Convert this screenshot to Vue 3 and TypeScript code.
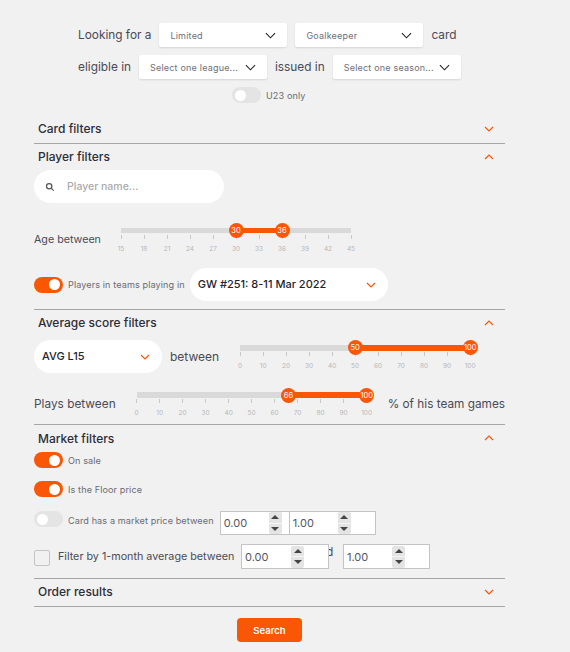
<script setup lang="ts">
import { ref } from 'vue'

interface Slider { min: number; max: number; low: number; high: number; labels: number[] }

const range = (start: number, step: number, n: number): number[] =>
  Array.from({ length: n }, (_, i) => start + i * step)

const ageSlider: Slider = { min: 15, max: 45, low: 30, high: 36, labels: range(15, 3, 11) }
const avgSlider: Slider = { min: 0, max: 100, low: 50, high: 100, labels: range(0, 10, 11) }
const playSlider: Slider = { min: 0, max: 100, low: 66, high: 100, labels: range(0, 10, 11) }

const pct = (s: Slider, v: number): string => `${((v - s.min) / (s.max - s.min)) * 100}%`
const fillStyle = (s: Slider) => ({ left: pct(s, s.low), right: `calc(100% - ${pct(s, s.high)})` })

const name = ref('')
</script>

<template>
  <main class="page">
    <h1 class="title">Card finder</h1>

    <div class="intro">
      <div class="intro-row">
        <span>Looking for a</span>
        <div class="drop"><span>Limited</span><svg class="chev" viewBox="0 0 12 7"><path d="M1 1l5 5 5-5" /></svg></div>
        <div class="drop"><span>Goalkeeper</span><svg class="chev" viewBox="0 0 12 7"><path d="M1 1l5 5 5-5" /></svg></div>
        <span>card</span>
      </div>
      <div class="intro-row">
        <span>eligible in</span>
        <div class="drop"><span>Select one league...</span><svg class="chev" viewBox="0 0 12 7"><path d="M1 1l5 5 5-5" /></svg></div>
        <span>issued in</span>
        <div class="drop"><span>Select one season...</span><svg class="chev" viewBox="0 0 12 7"><path d="M1 1l5 5 5-5" /></svg></div>
      </div>
      <div class="u23">
        <span class="toggle off"><i></i></span>
        <span class="small">U23 only</span>
      </div>
    </div>

    <section class="sec sec-closed first">
      <header class="head"><span>Card filters</span><svg class="acc" viewBox="0 0 10 6"><path d="M1 1l4 4 4-4" /></svg></header>
    </section>

    <section class="sec player">
      <header class="head"><span>Player filters</span><svg class="acc" viewBox="0 0 10 6"><path d="M1 5l4-4 4 4" /></svg></header>
      <label class="search">
        <svg viewBox="0 0 12 12" class="mag"><circle cx="5" cy="5" r="3.2" /><path d="M7.4 7.4l3 3" /></svg>
        <input v-model="name" placeholder="Player name..." />
      </label>

      <div class="slide-row age-row">
        <span class="lbl age-lbl">Age between</span>
        <div class="slider">
          <div class="track">
            <div class="fill" :style="fillStyle(ageSlider)"></div>
            <span class="handle" :style="{ left: pct(ageSlider, ageSlider.low) }">{{ ageSlider.low }}</span>
            <span class="handle" :style="{ left: pct(ageSlider, ageSlider.high) }">{{ ageSlider.high }}</span>
          </div>
          <div class="scale">
            <div v-for="l in ageSlider.labels" :key="l" class="tick"><i></i><span>{{ l }}</span></div>
          </div>
        </div>
      </div>

      <div class="teams">
        <span class="toggle on"><i></i></span>
        <span class="small">Players in teams playing in</span>
        <div class="pill gw"><span>GW #251: 8-11 Mar 2022</span><svg class="acc" viewBox="0 0 10 6"><path d="M1 1l4 4 4-4" /></svg></div>
      </div>
    </section>

    <section class="sec score">
      <header class="head"><span>Average score filters</span><svg class="acc" viewBox="0 0 10 6"><path d="M1 5l4-4 4 4" /></svg></header>
      <div class="slide-row avg-row">
        <div class="pill avg"><span>AVG L15</span><svg class="acc" viewBox="0 0 10 6"><path d="M1 1l4 4 4-4" /></svg></div>
        <span class="lbl between">between</span>
        <div class="slider">
          <div class="track thick">
            <div class="fill" :style="fillStyle(avgSlider)"></div>
            <span class="handle" :style="{ left: pct(avgSlider, avgSlider.low) }">{{ avgSlider.low }}</span>
            <span class="handle" :style="{ left: pct(avgSlider, avgSlider.high) }">{{ avgSlider.high }}</span>
          </div>
          <div class="scale">
            <div v-for="l in avgSlider.labels" :key="l" class="tick"><i></i><span>{{ l }}</span></div>
          </div>
        </div>
      </div>
      <div class="slide-row plays-row">
        <span class="lbl plays-lbl">Plays between</span>
        <div class="slider">
          <div class="track thick">
            <div class="fill" :style="fillStyle(playSlider)"></div>
            <span class="handle" :style="{ left: pct(playSlider, playSlider.low) }">{{ playSlider.low }}</span>
            <span class="handle" :style="{ left: pct(playSlider, playSlider.high) }">{{ playSlider.high }}</span>
          </div>
          <div class="scale">
            <div v-for="l in playSlider.labels" :key="l" class="tick"><i></i><span>{{ l }}</span></div>
          </div>
        </div>
        <span class="lbl pct-lbl">% of his team games</span>
      </div>
    </section>

    <section class="sec market">
      <header class="head market-head"><span>Market filters</span><svg class="acc" viewBox="0 0 10 6"><path d="M1 5l4-4 4 4" /></svg></header>
      <div class="m-row"><span class="toggle on"><i></i></span><span class="small">On sale</span></div>
      <div class="m-row floor"><span class="toggle on"><i></i></span><span class="small">Is the Floor price</span></div>
      <div class="m-row price">
        <span class="toggle off"><i></i></span>
        <span class="small">Card has a market price between</span>
        <div class="nums">
          <div class="num n1"><span class="val">0.00</span><span class="spin"><b class="up"></b><b class="dn"></b></span></div>
          <div class="num n2"><span class="val">1.00</span><span class="spin"><b class="up"></b><b class="dn"></b></span></div>
        </div>
      </div>
      <div class="m-row month">
        <span class="check"></span>
        <span class="month-lbl">Filter by 1-month average between</span>
        <div class="num n3"><span class="val">0.00</span><span class="spin"><b class="up"></b><b class="dn"></b></span></div>
        <span class="and">and</span>
        <div class="num n4"><span class="val">1.00</span><span class="spin"><b class="up"></b><b class="dn"></b></span></div>
      </div>
    </section>

    <section class="sec sec-closed">
      <header class="head"><span>Order results</span><svg class="acc" viewBox="0 0 10 6"><path d="M1 1l4 4 4-4" /></svg></header>
    </section>

    <div class="actions"><button class="go" type="button">Search</button></div>
  </main>
</template>

<style>
html, body { margin: 0; background: #f1f1f1; }
</style>

<style scoped>
.page {
  box-sizing: border-box;
  height: 652px;
  margin-left: 34px;
  width: 480px;
  overflow: hidden;
  font-family: Inter, "Liberation Sans", sans-serif;
  color: #3d3d4a;
}
.title {
  width: 471px;
  margin: -23px 0 0;
  height: 46px;
  line-height: 32px;
  text-align: center;
  font-size: 21px;
  font-weight: 700;
  color: #f95606;
}
.intro { padding-left: 44px; }
.intro-row {
  display: flex;
  align-items: center;
  gap: 8px;
  height: 24px;
  margin-bottom: 8px;
  font-size: 11.85px;
  font-weight: 400;
  color: #4a4a55;
}
.drop {
  box-sizing: border-box;
  width: 128px;
  height: 24px;
  padding: 0 11px 0 11px;
  display: flex;
  align-items: center;
  justify-content: space-between;
  background: #fff;
  border-radius: 2px;
  box-shadow: 0 1px 2px rgba(0, 0, 0, 0.12);
  font-size: 9px;
  letter-spacing: 0.2px;
  white-space: nowrap;
  color: #6f6f78;
}
.chev { width: 11px; height: 7px; flex: none; }
.chev path { fill: none; stroke: #222; stroke-width: 1.2; }
.acc { width: 10px; height: 6px; flex: none; }
.acc path { fill: none; stroke: #f95606; stroke-width: 1.2; }
.u23 { display: flex; align-items: center; gap: 5px; height: 16px; margin-left: 154px; }
.small { font-size: 9.1px; letter-spacing: 0.1px; color: #6b6b74; white-space: nowrap; }
.toggle {
  flex: none;
  width: 29px;
  height: 16px;
  border-radius: 8px;
  display: flex;
  align-items: center;
  padding: 0 3px;
  box-sizing: border-box;
}
.toggle i { width: 11px; height: 11px; border-radius: 50%; background: #fff; }
.toggle.on { background: #f95606; justify-content: flex-end; }
.toggle.off { background: #e4e4e4; }
.sec { width: 471px; border-bottom: 1px solid #a6a6a6; }
.first { margin-top: 13px; }
.sec-closed { padding-bottom: 1px; }
.head {
  height: 26px;
  display: flex;
  align-items: center;
  justify-content: space-between;
  padding: 0 11px 0 4px;
  font-size: 12px;
  font-weight: 500;
  color: #2d2d38;
}
.head span { margin-bottom: 2px; }
.market-head span { margin-bottom: 0; }
.search {
  display: flex;
  align-items: center;
  box-sizing: border-box;
  width: 190px;
  height: 33px;
  padding-left: 11px;
  gap: 12px;
  background: #fff;
  border-radius: 17px;
}
.mag { width: 10px; height: 10px; flex: none; }
.mag circle, .mag path { fill: none; stroke: #555; stroke-width: 1.5; }
.search input {
  width: 130px;
  border: 0;
  outline: 0;
  padding: 0;
  background: transparent;
  font: 500 10.5px Inter, sans-serif;
}
.search input::placeholder { color: #aaa; opacity: 1; }
.slide-row { display: flex; align-items: center; gap: 21px; }
.age-row { margin-top: 20px; }
.lbl { font-size: 12px; color: #4a4a55; white-space: nowrap; }
.age-lbl { width: 66px; font-size: 10.7px; }
.plays-lbl { width: 82px; font-size: 11.85px; }
.pct-lbl { font-size: 11.8px; }
.plays-lbl { width: 83px; }
.slider { flex: none; width: 230px; height: 32px; }
.track {
  position: relative;
  top: 5px;
  height: 5px;
  background: #d9d9d9;
}
.track.thick { top: 4px; height: 6px; }
.fill { position: absolute; top: 0; bottom: 0; background: #f95606; }
.handle {
  position: absolute;
  top: 50%;
  width: 15px;
  height: 15px;
  margin: -7.5px 0 0 -7.5px;
  border-radius: 50%;
  background: #f95606;
  color: #fff;
  font-size: 7.5px;
  line-height: 15px;
  text-align: center;
}
.scale { display: flex; justify-content: space-between; margin-top: 7px; }
.thick + .scale { margin-top: 5px; }
.tick { width: 0; display: flex; flex-direction: column; align-items: center; }
.tick i { flex: none; width: 1px; height: 4px; background: #c9c9c9; }
.tick span { margin-top: 6px; font-size: 6.5px; line-height: 9px; color: #b7b7b7; }
.teams { display: flex; align-items: center; margin-top: 13px; padding-bottom: 8px; gap: 5px; }
.pill {
  flex: none;
  box-sizing: border-box;
  height: 33px;
  display: flex;
  align-items: center;
  justify-content: space-between;
  background: #fff;
  border-radius: 17px;
  font-size: 11px;
  font-weight: 500;
  color: #24242e;
}
.pill span { margin-bottom: 2px; }
.gw { width: 198px; padding: 0 12px 0 8px; }
.avg { width: 128px; padding: 0 12px 0 8px; }
.avg-row { margin-top: 4px; }
.between { margin-left: -13px; }
.plays-row { margin-top: 15px; padding-bottom: 4px; }
.m-row { display: flex; align-items: center; gap: 5px; }
.market .m-row:nth-of-type(1) { margin-top: 1px; }
.floor { margin-top: 13px; }
.price { align-items: flex-start; margin-top: 14px; }
.price .small { line-height: 20px; }
.nums { display: flex; margin-left: 1px; }
.num {
  position: relative;
  box-sizing: border-box;
  height: 24px;
  display: flex;
  align-items: center;
  background: #fff;
  border: 1px solid #c4c4c4;
  font-size: 11px;
  color: #55555f;
}
.val { padding-left: 3px; }
.spin {
  flex: none;
  display: flex;
  flex-direction: column;
  width: 13px;
  height: 22px;
  background: #e4e4e4;
  border-radius: 2px;
}
.spin b { flex: 1; display: flex; align-items: center; justify-content: center; }
.spin b::after { content: ""; border: 4px solid transparent; }
.spin .up::after { border-top: 0; border-bottom: 4px solid #444; }
.spin .dn { border-top: 1px solid #f5f5f5; }
.spin .dn::after { border-bottom: 0; border-top: 4px solid #444; }
.n1 { width: 70px; }
.n1 .val { width: 45px; }
.n2 { width: 87px; margin-left: -1px; }
.n2 .val { width: 45px; }
.n3 { width: 88px; height: 25px; z-index: 1; }
.n3 .val { width: 46px; }
.n4 { width: 87px; height: 25px; }
.n4 .val { width: 45px; }
.month { margin-top: 9px; padding-bottom: 9px; gap: 0; }
.check {
  flex: none;
  box-sizing: border-box;
  width: 16px;
  height: 16px;
  margin: 3px 8px 0 0;
  background: #f1f1f1;
  border: 1px solid #c4c4c4;
  border-radius: 2px;
}
.month-lbl { width: 183px; font-size: 10.75px; color: #4a4a55; white-space: nowrap; }
.and {
  flex: none;
  width: 21px;
  margin: 1px 9px 0 -16px;
  align-self: flex-start;
  font-size: 11.5px;
  line-height: 14px;
  color: #4a4a55;
}
.actions { width: 471px; display: flex; justify-content: center; margin-top: 11px; }
.go {
  width: 65px;
  height: 24px;
  padding: 0;
  border: 0;
  border-radius: 4px;
  background: #f95606;
  color: #fff;
  font: 600 9.5px Inter, sans-serif;
}
</style>
